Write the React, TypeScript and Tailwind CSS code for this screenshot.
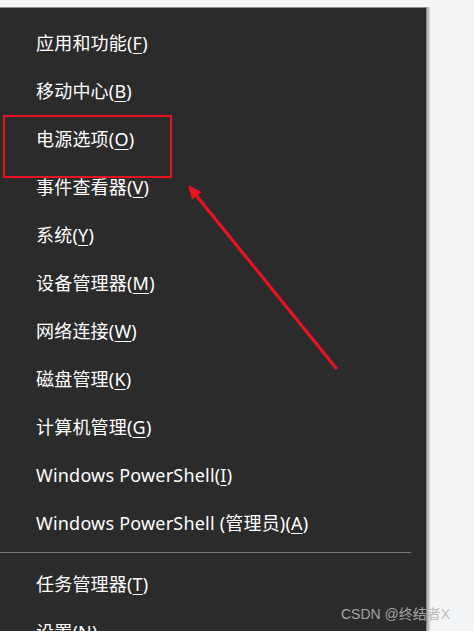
import React from 'react';

type Item = { label: string; key: string; after?: string };

const items: Item[] = [
	{ label: '应用和功能(', key: 'F', after: ')' },
	{ label: '移动中心(', key: 'B', after: ')' },
	{ label: '电源选项(', key: 'O', after: ')' },
	{ label: '事件查看器(', key: 'V', after: ')' },
	{ label: '系统(', key: 'Y', after: ')' },
	{ label: '设备管理器(', key: 'M', after: ')' },
	{ label: '网络连接(', key: 'W', after: ')' },
	{ label: '磁盘管理(', key: 'K', after: ')' },
	{ label: '计算机管理(', key: 'G', after: ')' },
	{ label: 'Windows PowerShell(', key: 'I', after: ')' },
	{ label: 'Windows PowerShell (管理员)(', key: 'A', after: ')' },
];

const lower: Item[] = [
	{ label: '任务管理器(', key: 'T', after: ')' },
	{ label: '设置(', key: 'N', after: ')' },
];

const font = { fontFamily: '"Segoe UI", "Noto Sans", "Noto Sans CJK SC", sans-serif' };

const MenuRow: React.FC<{ item: Item }> = ({ item }) => (
	<div className="h-12 flex items-center pl-9 text-[18px] text-white whitespace-nowrap tracking-[0.2px]">
		<span>
			{item.label}
			<u className="underline-offset-[3px] decoration-1">{item.key}</u>
			{item.after}
		</span>
	</div>
);

const App: React.FC = () => {
	return (
		<div className="relative w-[474px] h-[631px] overflow-hidden bg-[#f4f5f7]" style={font}>
			<div className="flex pt-[7px] h-full">
				<div className="w-[427px] h-full bg-[#2b2b2b] border-t border-r border-[#8a8a8a] pt-[11px]">
					{items.map((it) => (
						<MenuRow key={it.key} item={it} />
					))}
					<div className="mt-[5px] mb-[7px] mr-[15px] h-px bg-[#7a7a7a]" />
					{lower.map((it) => (
						<MenuRow key={it.key} item={it} />
					))}
				</div>
				<div className="w-1 h-full bg-gradient-to-r from-[#a8a8a8] to-[#f4f5f7]" />
			</div>

			{/* annotation: box + arrow */}
			<svg className="absolute inset-0 pointer-events-none" width="474" height="631">
				<rect x="4" y="116" width="167" height="61" fill="none" stroke="#e8131f" strokeWidth="2" />
				<line x1="336" y1="368" x2="195" y2="194" stroke="#e8131f" strokeWidth="3.2" strokeLinecap="round" />
				<polygon points="188,185 201.5,192.1 192.1,199.7" fill="#e8131f" />
			</svg>

			<div
				className="absolute left-[341px] top-[604px] text-[14px] text-[#b5b5b5]/90 whitespace-nowrap"
				style={{ fontFamily: '"Liberation Sans", "Noto Sans CJK SC", sans-serif' }}
			>
				CSDN @终结者X
			</div>
		</div>
	);
};

export default App;
